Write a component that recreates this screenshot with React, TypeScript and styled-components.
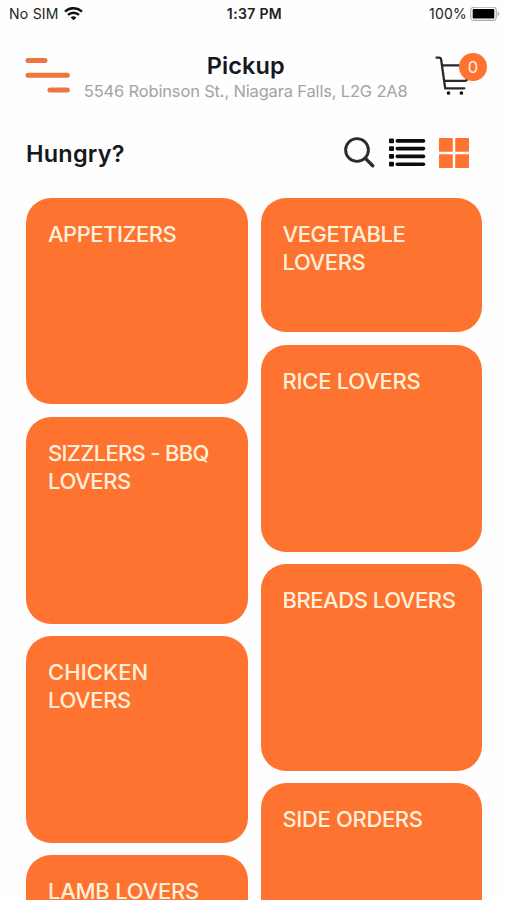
import React from 'react';
import styled, { createGlobalStyle } from 'styled-components';

const ORANGE = '#ff7330';
const INK = '#15181c';

const GlobalStyle = createGlobalStyle`
  * { box-sizing: border-box; }
  body { margin: 0; background: #fefefe; overflow: hidden; }
`;

const Screen = styled.div`
  width: 507px;
  height: 900px;
  overflow: hidden;
  background: #fefefe;
  font-family: Inter, 'Liberation Sans', sans-serif;
  color: ${INK};
`;

const StatusBar = styled.div`
  display: grid;
  grid-template-columns: 1fr auto 1fr;
  align-items: center;
  height: 28px;
  padding: 0 7px 0 9px;
  font-size: 14px;
  line-height: 28px;
  color: #222;
`;

const StatusGroup = styled.div<{ $end?: boolean }>`
  display: flex;
  align-items: center;
  gap: ${p => (p.$end ? 3 : 5)}px;
  justify-content: ${p => (p.$end ? 'flex-end' : 'flex-start')};
`;

const Label = styled.span<{ $spacing: number }>`
  letter-spacing: ${p => p.$spacing}px;
  white-space: nowrap;
`;

const Clock = styled(Label)`
  font-size: 14px;
  font-weight: 600;
`;

const Header = styled.header`
  display: grid;
  grid-template-columns: 46px 1fr 54px;
  height: 88px;
  padding: 24px 19px 0 23.5px;
`;

const MenuButton = styled.button`
  display: flex;
  align-items: flex-start;
  padding: 4px 0 0;
  border: 0;
  background: none;
`;

const Heading = styled.div`
  display: flex;
  flex-direction: column;
  align-items: center;
  padding-right: 12px;
`;

const Title = styled.h1`
  margin: 0;
  font-size: 23.5px;
  font-weight: 600;
  line-height: 27px;
  letter-spacing: 0.1px;
`;

const Address = styled.p`
  margin: 0;
  font-size: 16.5px;
  line-height: 25px;
  letter-spacing: -0.17px;
  white-space: nowrap;
  color: #a3a3a3;
`;

const Cart = styled.div`
  position: relative;
  padding-top: 3px;
`;

const Badge = styled.span`
  position: absolute;
  top: 1px;
  right: 1px;
  width: 28px;
  height: 28px;
  border-radius: 50%;
  background: ${ORANGE};
  color: #fff0df;
  font-size: 16.5px;
  line-height: 28px;
  text-align: center;
`;

const Toolbar = styled.div`
  display: flex;
  align-items: center;
  justify-content: space-between;
  height: 74px;
  padding: 0 38px 0 26px;
`;

const Question = styled.h2`
  margin: 0;
  padding-top: 1px;
  font-size: 23.5px;
  font-weight: 600;
  line-height: 30px;
  letter-spacing: 0.2px;
`;

const Tools = styled.div`
  display: flex;
  align-items: center;
  gap: 13px;
`;

const Board = styled.main`
  display: grid;
  grid-template-columns: 221.5px 221.5px;
  gap: 13px;
  padding: 7.8px 26px 0;
`;

const Column = styled.div`
  display: flex;
  flex-direction: column;
  gap: 12.5px;
`;

const Tile = styled.section<{ $short?: boolean }>`
  height: ${p => (p.$short ? 134.7 : 206.7)}px;
  padding: 22px 22px 0;
  border-radius: 25px;
  background: ${ORANGE};
`;

const TileLine = styled.div<{ $spacing: number }>`
  font-size: 22px;
  font-weight: 500;
  line-height: 28px;
  letter-spacing: ${p => p.$spacing}px;
  white-space: nowrap;
  color: #fff0dc;
`;

type Line = [text: string, spacing: number];
type Category = { lines: Line[]; short?: boolean };

const lovers: Line = ['LOVERS', -0.4];

const left: Category[] = [
  { lines: [['APPETIZERS', -0.5]] },
  { lines: [['SIZZLERS - BBQ', -0.68], lovers] },
  { lines: [['CHICKEN', 0.08], lovers] },
  { lines: [['LAMB LOVERS', -0.25]] },
];

const right: Category[] = [
  { lines: [['VEGETABLE', -0.45], lovers], short: true },
  { lines: [['RICE LOVERS', -0.25]] },
  { lines: [['BREADS LOVERS', -0.45]] },
  { lines: [['SIDE ORDERS', -0.35]] },
];

const WifiIcon = () => (
  <svg width="19" height="14" viewBox="0 0 19 14" fill="none" stroke="#111" strokeWidth="2.5">
    <path d="M1 4.6C5.8 .1 13.2 .1 18 4.6" />
    <path d="M4 7.9c3.2-2.9 7.8-2.9 11 0" />
    <path d="M6.6 10.4c1.7-1.4 4.1-1.4 5.8 0L9.5 13.3z" fill="#111" stroke="none" />
  </svg>
);

const BatteryIcon = () => (
  <svg width="30" height="15" viewBox="0 0 30 15">
    <rect x=".7" y=".2" width="25.6" height="13.2" rx="3.5" fill="#fff" stroke="#aaa" strokeWidth="1.1" />
    <rect x="2.7" y="2" width="21.6" height="9.6" rx="1.2" fill="#000" />
    <path d="M27.7 4.5v4.6c2-.8 2-3.8 0-4.6z" fill="#aaa" />
  </svg>
);

const MenuIcon = () => (
  <svg width="46" height="38" viewBox="0 0 46 38" stroke="#ee7440" strokeWidth="5" strokeLinecap="round">
    <path d="M4 4.5h17M4 19.3h39.3M26 34h17.3" />
  </svg>
);

const CartIcon = () => (
  <svg width="36" height="42" viewBox="0 0 36 42" fill="none" stroke="#25292e" strokeWidth="2.3" strokeLinecap="round" strokeLinejoin="round">
    <path d="M2.5 2.6h2.6c1.2 0 1.8.6 2 1.8L11.2 33.3H30.3" />
    <path d="M8.4 10.4h22M10.4 25.8H31c1.3 0 2-.7 2.3-2" />
    <circle cx="14.5" cy="38" r="1.2" fill="#15181c" stroke="#15181c" strokeWidth="1.3" />
    <circle cx="27.4" cy="38" r="1.2" fill="#15181c" stroke="#15181c" strokeWidth="1.3" />
  </svg>
);

const SearchIcon = () => (
  <svg width="31" height="32" viewBox="0 0 31 32" fill="none" stroke="#292b2d" strokeLinecap="round">
    <circle cx="13" cy="13" r="11.4" strokeWidth="2.9" />
    <path d="M21.4 21.4l7.3 7.3" strokeWidth="3.4" />
  </svg>
);

const ListIcon = () => (
  <svg width="38" height="30" viewBox="0 0 38 30">
    {[0.5, 8.2, 16, 23.8].map(y => (
      <g key={y} fill="#0c0c10">
        <rect x="1" y={y} width="5" height="4.8" rx="1" />
        <rect x="7.5" y={y + 0.6} width="29.8" height="3.6" rx="1.8" />
      </g>
    ))}
  </svg>
);

const GridIcon = () => (
  <svg width="30" height="30" viewBox="0 0 30 30" fill={ORANGE}>
    <rect width="13.8" height="13.8" rx=".8" />
    <rect x="16.2" width="13.8" height="13.8" rx=".8" />
    <rect y="16.2" width="13.8" height="13.8" rx=".8" />
    <rect x="16.2" y="16.2" width="13.8" height="13.8" rx=".8" />
  </svg>
);

const CategoryColumn = ({ items }: { items: Category[] }) => (
  <Column>
    {items.map((item, i) => (
      <Tile key={i} $short={item.short}>
        {item.lines.map(([text, spacing]) => (
          <TileLine key={text} $spacing={spacing}>{text}</TileLine>
        ))}
      </Tile>
    ))}
  </Column>
);

export default function App() {
  return (
    <Screen>
      <GlobalStyle />
      <StatusBar>
        <StatusGroup>
          <Label $spacing={0.25}>No SIM</Label>
          <WifiIcon />
        </StatusGroup>
        <Clock $spacing={0.35}>1:37 PM</Clock>
        <StatusGroup $end>
          <Label $spacing={0.2}>100%</Label>
          <BatteryIcon />
        </StatusGroup>
      </StatusBar>
      <Header>
        <MenuButton aria-label="Menu"><MenuIcon /></MenuButton>
        <Heading>
          <Title>Pickup</Title>
          <Address>5546 Robinson St., Niagara Falls, L2G 2A8</Address>
        </Heading>
        <Cart>
          <CartIcon />
          <Badge>0</Badge>
        </Cart>
      </Header>
      <Toolbar>
        <Question>Hungry?</Question>
        <Tools>
          <SearchIcon />
          <ListIcon />
          <GridIcon />
        </Tools>
      </Toolbar>
      <Board>
        <CategoryColumn items={left} />
        <CategoryColumn items={right} />
      </Board>
    </Screen>
  );
}
